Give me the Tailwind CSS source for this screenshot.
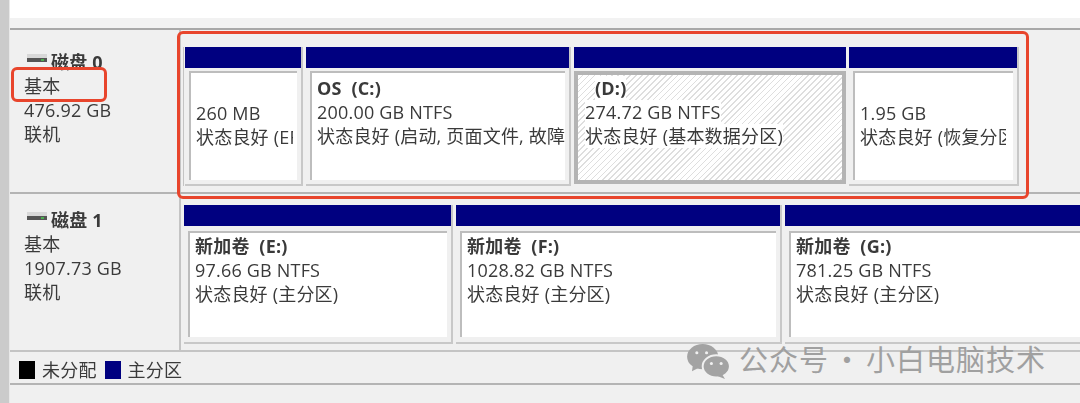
<!DOCTYPE html>
<html lang="zh-CN">
<head>
    <meta charset="UTF-8">
    <title>磁盘管理</title>
    <script src="https://cdn.jsdelivr.net/npm/@tailwindcss/browser@4"></script>
</head>
<body class="w-[1080px] h-[403px] overflow-hidden bg-[#f0f0f0]">
<div class="relative w-[1080px] h-[403px] overflow-hidden flex font-['Open_Sans','Noto_Sans_CJK_SC',sans-serif] text-[18px] leading-[24px] tracking-[0.2px] text-[#3a3a3a]">
    <!-- left window edge -->
    <div class="w-[10px] bg-[#cbcbcb] border-r border-[#e8e8e8] shrink-0"></div>

    <div class="flex-1 flex flex-col blur-[0.5px]">
        <!-- top list remainder -->
        <div class="h-[18px] bg-white"></div>
        <div class="h-[12px] bg-[#f2f2f2] border-b-2 border-[#a8a8a8]"></div>

        <!-- disk 0 -->
        <div class="h-[164px] flex border-b-2 border-[#b4b4b4]">
            <div class="w-[171px] shrink-0 border-r-2 border-[#c4c4c4] pl-[14px] pt-[20px]">
                <div class="flex items-center h-[24px] gap-[4px] pl-[3px]">
                    <svg class="mb-[6px]" width="20" height="10" viewBox="0 0 20 10"><rect x="0" y="0" width="20" height="4" fill="#d8d8d8"/><rect x="0" y="4" width="20" height="4" fill="#555"/><rect x="14" y="5" width="3" height="2" fill="#4caf50"/></svg>
                    <span class="font-bold">磁盘 0</span>
                </div>
                <div>基本</div>
                <div>476.92 GB</div>
                <div>联机</div>
            </div>
            <div class="flex-1 pl-[2px] pt-[17px] flex items-start">
                <div class="w-[839px] h-[139px] border-l border-[#c4c4c4] flex gap-[3px] pl-[1px] bg-[#f0f0f0]">
                    <div class="w-[118px] flex flex-col border-r-2 border-b-2 border-[#c8c8c8]">
                        <div class="h-[21px] bg-[#000080]"></div>
                        <div class="flex-1 mt-[3px] mx-[4px] mb-[4px] bg-white border-l-2 border-t-2 border-[#bdbdbd] pl-[5px] pt-[28px] whitespace-nowrap">
                            <div>260 MB</div>
                            <div class="w-[97px] overflow-hidden">状态良好 (EFI</div>
                        </div>
                    </div>
                    <div class="w-[265px] flex flex-col border-r-2 border-b-2 border-[#c8c8c8]">
                        <div class="h-[21px] bg-[#000080]"></div>
                        <div class="flex-1 mt-[3px] mx-[4px] mb-[4px] bg-white border-l-2 border-t-2 border-[#bdbdbd] pl-[5px] pt-[3px] whitespace-nowrap">
                            <div class="font-bold">OS&nbsp; (C:)</div>
                            <div>200.00 GB NTFS</div>
                            <div class="w-[248px]">状态良好 (启动, 页面文件, 故障</div>
                        </div>
                    </div>
                    <div class="w-[272px] flex flex-col">
                        <div class="h-[21px] bg-[#000080]"></div>
                        <div class="flex-1 mt-[3px] mb-[2px] border-[4px] border-[#b4b4b4] bg-[repeating-linear-gradient(135deg,#ffffff_0,#ffffff_3px,#dedede_3px,#dedede_4.2px)] pl-[7px] pt-[1px] whitespace-nowrap">
                            <div class="font-bold pl-[10px]"><span class="bg-white">(D:)</span></div>
                            <div><span class="bg-white">274.72 GB NTFS</span></div>
                            <div><span class="bg-white">状态良好 (基本数据分区)</span></div>
                        </div>
                    </div>
                    <div class="w-[170px] flex flex-col border-r-2 border-b-2 border-[#c8c8c8]">
                        <div class="h-[21px] bg-[#000080]"></div>
                        <div class="flex-1 mt-[3px] mx-[4px] mb-[4px] bg-white border-l-2 border-t-2 border-[#bdbdbd] pl-[5px] pt-[28px] whitespace-nowrap">
                            <div>1.95 GB</div>
                            <div class="w-[146px] overflow-hidden">状态良好 (恢复分区</div>
                        </div>
                    </div>
                </div>
            </div>
        </div>

        <!-- disk 1 -->
        <div class="h-[158px] flex">
            <div class="w-[171px] shrink-0 border-r-2 border-b-2 border-[#c4c4c4] pl-[14px] pt-[14px]">
                <div class="flex items-center h-[24px] gap-[4px] pl-[3px]">
                    <svg class="mb-[6px]" width="20" height="10" viewBox="0 0 20 10"><rect x="0" y="0" width="20" height="4" fill="#d8d8d8"/><rect x="0" y="4" width="20" height="4" fill="#555"/><rect x="14" y="5" width="3" height="2" fill="#4caf50"/></svg>
                    <span class="font-bold">磁盘 1</span>
                </div>
                <div>基本</div>
                <div>1907.73 GB</div>
                <div>联机</div>
            </div>
            <div class="flex-1 pl-[3px] pt-[11px] flex gap-[3px] border-b-2 border-[#c4c4c4] overflow-hidden">
                <div class="w-[269px] h-[139px] shrink-0 flex flex-col border-r-2 border-b-2 border-[#c8c8c8]">
                    <div class="h-[21px] bg-[#000080]"></div>
                    <div class="flex-1 mt-[5px] mx-[4px] mb-[5px] bg-white border-l-2 border-t-2 border-[#bdbdbd] pl-[5px] pt-[1px] whitespace-nowrap">
                        <div class="font-bold">新加卷&nbsp; (E:)</div>
                        <div>97.66 GB NTFS</div>
                        <div>状态良好 (主分区)</div>
                    </div>
                </div>
                <div class="w-[326px] h-[139px] shrink-0 flex flex-col border-r-2 border-b-2 border-[#c8c8c8]">
                    <div class="h-[21px] bg-[#000080]"></div>
                    <div class="flex-1 mt-[5px] mx-[4px] mb-[5px] bg-white border-l-2 border-t-2 border-[#bdbdbd] pl-[5px] pt-[1px] whitespace-nowrap">
                        <div class="font-bold">新加卷&nbsp; (F:)</div>
                        <div>1028.82 GB NTFS</div>
                        <div>状态良好 (主分区)</div>
                    </div>
                </div>
                <div class="w-[300px] h-[139px] shrink-0 flex flex-col border-b-2 border-[#c8c8c8]">
                    <div class="h-[21px] bg-[#000080]"></div>
                    <div class="flex-1 mt-[5px] mx-[4px] mb-[5px] bg-white border-l-2 border-t-2 border-[#bdbdbd] pl-[5px] pt-[1px] whitespace-nowrap">
                        <div class="font-bold">新加卷&nbsp; (G:)</div>
                        <div>781.25 GB NTFS</div>
                        <div>状态良好 (主分区)</div>
                    </div>
                </div>
            </div>
        </div>

        <!-- legend -->
        <div class="h-[33px] flex items-center pl-[9px] pt-[4px] border-b-2 border-[#b4b4b4]">
            <span class="w-[16px] h-[18px] bg-black mr-[7px]"></span>
            <span class="mr-[8px]">未分配</span>
            <span class="w-[16px] h-[18px] bg-[#000080] mr-[7px]"></span>
            <span>主分区</span>
        </div>

        <!-- status bar -->
        <div class="flex-1 bg-[#f0f0f0]"></div>
    </div>

    <!-- red annotation boxes -->
    <div class="absolute left-[177px] top-[31px] w-[852px] h-[168px] border-[3px] border-[#e8452c] rounded-[6px]"></div>
    <div class="absolute left-[11px] top-[67px] w-[96px] h-[35px] border-[3px] border-[#e8452c] rounded-[6px]"></div>

    <!-- watermark -->
    <div class="absolute left-[687px] top-[337px] flex items-center text-[#a0a0a0] text-[29px] leading-[40px] tracking-[1px] [word-spacing:-4px] font-['Noto_Sans_CJK_SC',sans-serif] whitespace-nowrap">
        <svg class="mr-[9px] mt-[7px]" width="43" height="35" viewBox="0 0 44 36">
            <ellipse cx="16" cy="13" rx="16" ry="13" fill="#a3a3a3"/>
            <path d="M6 21l-1 7 8-4z" fill="#a3a3a3"/>
            <ellipse cx="30" cy="23" rx="14" ry="11.5" fill="#a3a3a3" stroke="#f0f0f0" stroke-width="2"/>
            <path d="M36 31l3 5-8-3z" fill="#a3a3a3"/>
            <circle cx="10" cy="9" r="1.6" fill="#f0f0f0"/><circle cx="20" cy="9" r="1.6" fill="#f0f0f0"/>
            <circle cx="25" cy="20" r="1.6" fill="#f0f0f0"/><circle cx="35" cy="20" r="1.6" fill="#f0f0f0"/>
        </svg>
        <span>公众号 · 小白电脑技术</span>
    </div>
</div>
</body>
</html>
